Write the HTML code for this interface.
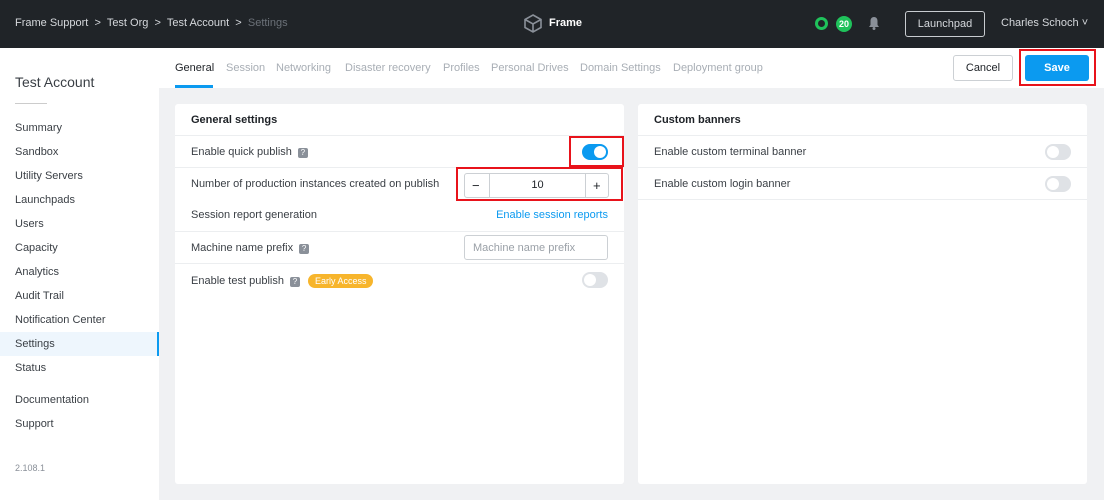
<!DOCTYPE html><html><head><style>
*{box-sizing:border-box;margin:0;padding:0}
body{width:1104px;height:500px;overflow:hidden;font-family:"Liberation Sans",sans-serif;background:#fff;position:relative;font-size:11px;color:#3a3f45}
.top{position:absolute;left:0;top:0;width:1104px;height:48px;background:#202428;color:#d5d8dc}
.abs{position:absolute}
.side{position:absolute;left:0;top:48px;width:159px;height:452px;background:#fff}
.side div.i{position:absolute;left:15px;font-size:11px;color:#3a3f45}
.main{position:absolute;left:159px;top:88px;width:945px;height:412px;background:#f0f1f3}
.card{position:absolute;top:104px;height:380px;background:#fff;border-radius:3px}
.row{position:absolute;left:0;right:0;height:32px;border-top:1px solid #eceef0}
.row span.l{position:absolute;left:16px;top:10px;color:#3a3f45}
.q{display:inline-block;width:10px;height:10px;background:#8a9099;border-radius:2px;color:#fff;font-size:8px;text-align:center;line-height:10px;margin-left:6px;vertical-align:0}
.tg{position:absolute;width:26px;height:16px;border-radius:8px;background:#dfe2e6}
.tg i{position:absolute;top:2px;left:2px;width:12px;height:12px;border-radius:6px;background:#fff}
.red{position:absolute;border:2px solid #e8131b}
.tab{position:absolute;top:62px;font-size:11px;color:#a8aeb5}
</style></head><body>
<div class="top">
<div class="abs" style="left:15px;top:17px;font-size:11px">Frame Support &nbsp;&gt;&nbsp; Test Org &nbsp;&gt;&nbsp; Test Account &nbsp;&gt;&nbsp; <span style="color:#6b7178">Settings</span></div>
<svg class="abs" style="left:524px;top:14px" width="18" height="19" viewBox="0 0 18 19"><path d="M9 1L17 5.5V13.5L9 18L1 13.5V5.5Z M1 5.5L9 10L17 5.5 M9 10V18" fill="none" stroke="#8a9099" stroke-width="1.6"/></svg>
<div class="abs" style="left:549px;top:17px;color:#fff;font-weight:bold;font-size:11px">Frame</div>
<div class="abs" style="left:815px;top:17px;width:13px;height:13px;border:3px solid #1fc25b;border-radius:50%"></div>
<div class="abs" style="left:836px;top:16px;width:16px;height:16px;background:#1fc25b;border-radius:50%;color:#fff;font-size:9px;font-weight:bold;text-align:center;line-height:16px">20</div>
<svg class="abs" style="left:868px;top:16px" width="12" height="14" viewBox="0 0 12 14"><path d="M6 1C3.5 1 2.5 3 2.5 5V9L1 11H11L9.5 9V5C9.5 3 8.5 1 6 1Z" fill="#8a9099"/><circle cx="6" cy="12.5" r="1.5" fill="#8a9099"/></svg>
<div class="abs" style="left:905px;top:11px;width:80px;height:26px;border:1px solid #c8ccd0;border-radius:3px;text-align:center;line-height:24px;color:#d5d8dc">Launchpad</div>
<div class="abs" style="left:1001px;top:17px">Charles Schoch ˅</div>
</div>
<div class="side">
<div class="i" style="top:26px;font-size:14px">Test Account</div>
<div class="abs" style="left:15px;top:55px;width:32px;height:1px;background:#ccc"></div>
<div class="i" style="top:74px">Summary</div>
<div class="i" style="top:98px">Sandbox</div>
<div class="i" style="top:122px">Utility Servers</div>
<div class="i" style="top:146px">Launchpads</div>
<div class="i" style="top:170px">Users</div>
<div class="i" style="top:194px">Capacity</div>
<div class="i" style="top:218px">Analytics</div>
<div class="i" style="top:242px">Audit Trail</div>
<div class="i" style="top:266px">Notification Center</div>
<div class="abs" style="left:0;top:284px;width:159px;height:24px;background:#eef6fd;border-right:2px solid #0b9af0"></div>
<div class="i" style="top:290px">Settings</div>
<div class="i" style="top:314px">Status</div>
<div class="i" style="top:346px">Documentation</div>
<div class="i" style="top:370px">Support</div>
<div class="i" style="top:415px;font-size:9px;color:#8a9099">2.108.1</div>
</div>
<div class="tab" style="left:175px;color:#1d2126">General</div>
<div class="abs" style="left:175px;top:85px;width:38px;height:3px;background:#0b9af0"></div>
<div class="tab" style="left:226px">Session</div>
<div class="tab" style="left:276px">Networking</div>
<div class="tab" style="left:345px">Disaster recovery</div>
<div class="tab" style="left:443px">Profiles</div>
<div class="tab" style="left:491px">Personal Drives</div>
<div class="tab" style="left:580px">Domain Settings</div>
<div class="tab" style="left:673px">Deployment group</div>
<div class="abs" style="left:953px;top:55px;width:60px;height:26px;border:1px solid #ccd0d4;border-radius:3px;text-align:center;line-height:24px;color:#1d2126">Cancel</div>
<div class="red" style="left:1019px;top:49px;width:77px;height:37px"></div>
<div class="abs" style="left:1025px;top:55px;width:64px;height:26px;background:#0b9af0;border-radius:3px;text-align:center;line-height:26px;color:#fff;font-weight:bold">Save</div>
<div class="main"></div>
<div class="card" style="left:175px;width:449px">
<div class="abs" style="left:16px;top:10px;font-weight:bold;color:#1d2126">General settings</div>
<div class="row" style="top:31px"><span class="l">Enable quick publish<span class="q">?</span></span><div class="tg" style="right:16px;top:8px;background:#0b9af0"><i style="left:12px"></i></div></div>
<div class="row" style="top:63px"><span class="l">Number of production instances created on publish</span>
<div class="abs" style="left:289px;top:5px;width:145px;height:25px;border:1px solid #ccd0d4;border-radius:3px;background:#fff">
<div class="abs" style="left:24px;top:0;width:97px;height:23px;border-left:1px solid #ccd0d4;border-right:1px solid #ccd0d4;text-align:center;line-height:23px;color:#1d2126">10</div>
<div class="abs" style="left:7px;top:4px;font-size:13px;color:#1d2126">−</div><div class="abs" style="left:128px;top:4px;font-size:13px;color:#1d2126">+</div></div></div>
<div class="row" style="top:95px;border-top:none"><span class="l">Session report generation</span><span class="abs" style="right:16px;top:10px;color:#0b9af0">Enable session reports</span></div>
<div class="row" style="top:127px"><span class="l">Machine name prefix<span class="q">?</span></span><div class="abs" style="left:289px;top:3px;width:144px;height:25px;border:1px solid #ccd0d4;border-radius:3px;color:#9aa0a7;padding:6px 8px">Machine name prefix</div></div>
<div class="row" style="top:159px"><span class="l">Enable test publish<span class="q">?</span><span style="display:inline-block;margin-left:8px;background:#f7b52c;color:#fff;font-size:9px;padding:2px 7px;border-radius:8px">Early Access</span></span><div class="tg" style="right:16px;top:8px"><i></i></div></div>
</div>
<div class="red" style="left:569px;top:136px;width:55px;height:31px"></div>
<div class="red" style="left:456px;top:167px;width:167px;height:34px"></div>
<div class="card" style="left:638px;width:449px">
<div class="abs" style="left:16px;top:10px;font-weight:bold;color:#1d2126">Custom banners</div>
<div class="row" style="top:31px"><span class="l">Enable custom terminal banner</span><div class="tg" style="right:16px;top:8px"><i></i></div></div>
<div class="row" style="top:63px"><span class="l">Enable custom login banner</span><div class="tg" style="right:16px;top:8px"><i></i></div></div>
<div class="row" style="top:95px;height:0"></div>
</div>
</body></html>
